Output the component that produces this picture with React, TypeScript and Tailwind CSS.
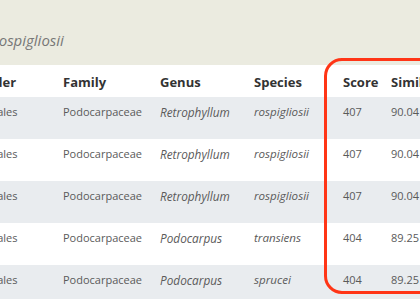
const rows = [
  { order: "Podocarpales", family: "Podocarpaceae", genus: "Retrophyllum", species: "rospigliosii", score: "407", sim: "90.04" },
  { order: "Podocarpales", family: "Podocarpaceae", genus: "Retrophyllum", species: "rospigliosii", score: "407", sim: "90.04" },
  { order: "Podocarpales", family: "Podocarpaceae", genus: "Retrophyllum", species: "rospigliosii", score: "407", sim: "90.04" },
  { order: "Podocarpales", family: "Podocarpaceae", genus: "Podocarpus", species: "transiens", score: "404", sim: "89.25" },
  { order: "Podocarpales", family: "Podocarpaceae", genus: "Podocarpus", species: "sprucei", score: "404", sim: "89.25" },
];

export default function App() {
  return (
    <div className="relative w-[420px] h-[307px] overflow-hidden bg-white font-['Open_Sans',sans-serif]">
      <div className="h-[65px] bg-[#ebebe0] flex items-end pb-[14px]">
        <span className="italic text-[15px] text-[#777] whitespace-nowrap -ml-[100px]">
          Retrophyllum rospigliosii
        </span>
      </div>

      <div className="-ml-[56px] w-[600px]">
        <div className="flex h-[32px] pt-[4px] items-center text-[13px] font-bold text-[#333]">
          <div className="w-[119px] pl-[34px]">Order</div>
          <div className="w-[97px]">Family</div>
          <div className="w-[94px]">Genus</div>
          <div className="w-[89px]">Species</div>
          <div className="w-[48px]">Score</div>
          <div>Similarity</div>
        </div>
        {rows.map((r, i) => (
          <div
            key={i}
            className={`flex pt-[7px] text-[11px] leading-[16px] text-[#5a5a5a] ${i % 2 === 0 ? "bg-[#e9ecef]" : "bg-white"} ${i === 4 ? "h-[34px]" : "h-[42px]"}`}
          >
            <div className="w-[119px] pl-[4px] whitespace-nowrap">{r.order}</div>
            <div className="w-[97px]">{r.family}</div>
            <div className="w-[94px] italic text-[11.8px]">{r.genus}</div>
            <div className="w-[89px] italic text-[11.6px]">{r.species}</div>
            <div className="w-[48px]">{r.score}</div>
            <div>{r.sim}</div>
          </div>
        ))}
      </div>

      <div className="absolute left-[324px] top-[58px] w-[140px] h-[236px] border-[3px] border-[#ff3516] rounded-[18px]" />
    </div>
  );
}
